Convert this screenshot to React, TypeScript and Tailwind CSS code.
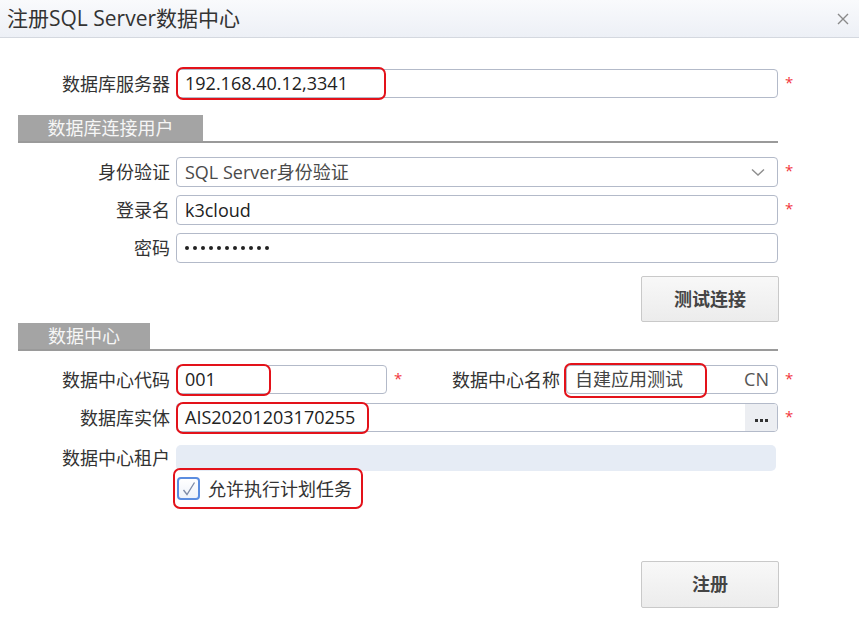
import React from "react";

const FONT = { fontFamily: '"Open Sans", "Noto Sans CJK SC", sans-serif' };

function Star({ className = "" }: { className?: string }) {
  return <span className={"text-[#f2353d] text-[15px] leading-none self-start mt-[6px] w-[8px] " + className}>*</span>;
}

function RedBox({ className }: { className: string }) {
  return <div className={"absolute border-2 border-[#e3121a] rounded-[7px] pointer-events-none " + className} />;
}

function Label({ children, className = "w-[176px]" }: { children: React.ReactNode; className?: string }) {
  return <div className={"text-right pr-[6px] text-[#333] text-[18px] leading-none shrink-0 " + className}>{children}</div>;
}

function SectionTab({ title, tabW, className = "" }: { title: string; tabW: string; className?: string }) {
  return (
    <div className={"ml-[18px] w-[760px] flex border-b-2 border-[#9a9a9a] " + className}>
      <div className={"h-[26px] bg-[#a4a4a4] text-[#f6f6f6] text-[18px] leading-none flex items-center justify-center " + tabW}>
        {title}
      </div>
    </div>
  );
}

export default function App() {
  return (
    <div className="w-[859px] h-[629px] bg-white flex flex-col" style={FONT}>
      {/* title bar */}
      <div className="h-[38px] shrink-0 flex items-center justify-between pl-[7px] pr-[10px] border-b border-[#d4d8df] bg-gradient-to-b from-[#f9fafc] to-[#edf0f6]">
        <div className="text-[21px] text-[#333] leading-none">注册SQL Server数据中心</div>
        <svg width="12" height="12" viewBox="0 0 12 12" className="text-[#8a8a8a]">
          <path d="M1 1 L11 11 M11 1 L1 11" stroke="currentColor" strokeWidth="1.4" />
        </svg>
      </div>

      {/* 数据库服务器 */}
      <div className="mt-[31px] flex items-center h-[29px]">
        <Label>数据库服务器</Label>
        <div className="relative w-[602px] h-[29px] border border-[#b3bac9] rounded-[4px] flex items-center px-[8px] text-[18px] text-[#222]">
          192.168.40.12,3341
          <RedBox className="-left-[1px] -top-[3px] w-[210px] h-[33px]" />
        </div>
        <Star className="ml-[7px]" />
      </div>

      <SectionTab title="数据库连接用户" tabW="w-[185px]" className="mt-[17px]" />

      {/* 身份验证 */}
      <div className="mt-[14px] flex items-center h-[30px]">
        <Label>身份验证</Label>
        <div className="w-[602px] h-[30px] border border-[#b3bac9] rounded-[4px] flex items-center justify-between pl-[8px] pr-[12px] text-[18px] text-[#4a4a4a]">
          <span>SQL Server身份验证</span>
          <svg width="14" height="9" viewBox="0 0 14 9">
            <path d="M1 1.5 L7 7 L13 1.5" fill="none" stroke="#8e8e8e" strokeWidth="1.4" />
          </svg>
        </div>
        <Star className="ml-[7px]" />
      </div>

      {/* 登录名 */}
      <div className="mt-[8px] flex items-center h-[30px]">
        <Label>登录名</Label>
        <div className="w-[602px] h-[30px] border border-[#b3bac9] rounded-[4px] flex items-center px-[8px] text-[18px] text-[#222]">
          k3cloud
        </div>
        <Star className="ml-[7px]" />
      </div>

      {/* 密码 */}
      <div className="mt-[8px] flex items-center h-[30px]">
        <Label>密码</Label>
        <div className="w-[602px] h-[30px] border border-[#b3bac9] rounded-[4px] flex items-center px-[8px] text-[#222]">
          <span className="flex gap-[4px]">
            {Array.from({ length: 11 }).map((_, i) => (
              <span key={i} className="w-[4px] h-[4px] rounded-full bg-[#222] inline-block" />
            ))}
          </span>
        </div>
      </div>

      {/* 测试连接 */}
      <div className="mt-[13px] flex justify-start pl-[641px]">
        <button className="w-[138px] h-[46px] border border-[#c9c9c9] rounded-[2px] bg-gradient-to-b from-[#f8f8f8] to-[#ececec] text-[18px] font-bold text-[#444] leading-none">
          测试连接
        </button>
      </div>

      <SectionTab title="数据中心" tabW="w-[132px]" className="mt-[1px]" />

      {/* 数据中心代码 / 名称 */}
      <div className="mt-[14px] flex items-center h-[29px]">
        <Label>数据中心代码</Label>
        <div className="relative w-[211px] h-[29px] border border-[#b3bac9] rounded-[4px] flex items-center px-[8px] text-[18px] text-[#222]">
          001
          <RedBox className="-left-[1px] -top-[2px] w-[95px] h-[32px]" />
        </div>
        <Star className="ml-[7px]" />
        <Label className="w-[164px]">数据中心名称</Label>
        <div className="relative w-[212px] h-[29px] border border-[#b3bac9] rounded-[4px] flex items-center justify-between px-[8px] text-[18px] text-[#444]">
          <span>自建应用测试</span>
          <span className="text-[#555]">CN</span>
          <RedBox className="-left-[3px] -top-[3px] w-[143px] h-[35px]" />
        </div>
        <Star className="ml-[7px]" />
      </div>

      {/* 数据库实体 */}
      <div className="mt-[9px] flex items-center h-[29px]">
        <Label>数据库实体</Label>
        <div className="relative w-[602px] h-[29px] border border-[#b3bac9] rounded-[4px] flex items-center text-[18px] text-[#222]">
          <span className="pl-[8px] flex-1">AIS20201203170255</span>
          <span className="w-[32px] h-full bg-[#eceef2] rounded-r-[3px] flex items-center justify-center gap-[2px] pt-[6px]">
            <span className="w-[3px] h-[3px] bg-[#333] inline-block" />
            <span className="w-[3px] h-[3px] bg-[#333] inline-block" />
            <span className="w-[3px] h-[3px] bg-[#333] inline-block" />
          </span>
          <RedBox className="-left-[1px] -top-[2px] w-[193px] h-[32px]" />
        </div>
        <Star className="ml-[7px]" />
      </div>

      {/* 数据中心租户 */}
      <div className="mt-[13px] flex items-center h-[26px]">
        <Label>数据中心租户</Label>
        <div className="w-[600px] h-[26px] rounded-[5px] bg-[#e6ecf5]" />
      </div>

      {/* checkbox */}
      <div className="mt-[6px] ml-[177px]">
        <div className="relative inline-flex items-center gap-[8px]">
          <div className="w-[23px] h-[23px] border-2 border-[#5b8de0] rounded-[4px] bg-gradient-to-b from-white to-[#eef2fa] flex items-center justify-center">
            <svg width="16" height="16" viewBox="0 0 16 16">
              <path d="M2.5 9 L6 13.5 L13.5 1.5" fill="none" stroke="#7d8aa6" strokeWidth="1.3" />
            </svg>
          </div>
          <span className="text-[18px] text-[#333] leading-none">允许执行计划任务</span>
          <RedBox className="-left-[4px] -top-[9px] w-[190px] h-[41px]" />
        </div>
      </div>

      {/* 注册 */}
      <div className="mt-[58px] pl-[641px]">
        <button className="w-[138px] h-[47px] border border-[#c9c9c9] rounded-[2px] bg-gradient-to-b from-[#f8f8f8] to-[#ececec] text-[18px] font-bold text-[#444] leading-none">
          注册
        </button>
      </div>
    </div>
  );
}
